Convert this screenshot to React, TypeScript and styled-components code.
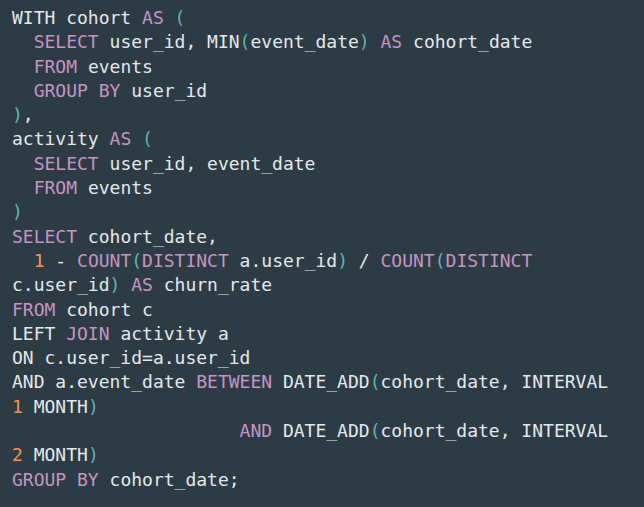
import React from "react";
import styled, { createGlobalStyle } from "styled-components";

const Global = createGlobalStyle`
  html, body { margin: 0; padding: 0; background: #2d3c44; }
`;

const Block = styled.pre`
  margin: 0;
  box-sizing: border-box;
  width: 644px;
  min-height: 507px;
  padding: 6px 18px 6px 12px;
  background: #2d3c44;
  color: #e4e8ec;
  font-family: "DejaVu Sans Mono", monospace;
  font-size: 18px;
  line-height: 24.3px;
  white-space: pre-wrap;
  word-break: normal;
`;

const Tok = styled.span<{ $k: "kw" | "p" | "n" }>`
  color: ${(p) => (p.$k === "kw" ? "#c594c5" : p.$k === "p" ? "#5fb3b3" : "#f99157")};
`;

const K = ({ children }: { children: React.ReactNode }) => <Tok $k="kw">{children}</Tok>;
const P = ({ children }: { children: React.ReactNode }) => <Tok $k="p">{children}</Tok>;
const N = ({ children }: { children: React.ReactNode }) => <Tok $k="n">{children}</Tok>;

export default function App() {
  return (
    <>
      <Global />
      <Block>
        WITH cohort <K>AS</K> <P>(</P>{"\n"}
        {"  "}<K>SELECT</K> user_id, MIN<P>(</P>event_date<P>)</P> <K>AS</K> cohort_date{"\n"}
        {"  "}<K>FROM</K> events{"\n"}
        {"  "}<K>GROUP BY</K> user_id{"\n"}
        <P>)</P>,{"\n"}
        activity <K>AS</K> <P>(</P>{"\n"}
        {"  "}<K>SELECT</K> user_id, event_date{"\n"}
        {"  "}<K>FROM</K> events{"\n"}
        <P>)</P>{"\n"}
        <K>SELECT</K> cohort_date,{"\n"}
        {"  "}<N>1</N> - <K>COUNT</K><P>(</P><K>DISTINCT</K> a.user_id<P>)</P> / <K>COUNT</K><P>(</P><K>DISTINCT</K> c.user_id<P>)</P> <K>AS</K> churn_rate{"\n"}
        <K>FROM</K> cohort c{"\n"}
        LEFT <K>JOIN</K> activity a{"\n"}
        ON c.user_id=a.user_id{"\n"}
        AND a.event_date <K>BETWEEN</K> DATE_ADD<P>(</P>cohort_date, INTERVAL <N>1</N> MONTH<P>)</P>{"\n"}
        {"                     "}<K>AND</K> DATE_ADD<P>(</P>cohort_date, INTERVAL <N>2</N> MONTH<P>)</P>{"\n"}
        <K>GROUP BY</K> cohort_date;
      </Block>
    </>
  );
}
